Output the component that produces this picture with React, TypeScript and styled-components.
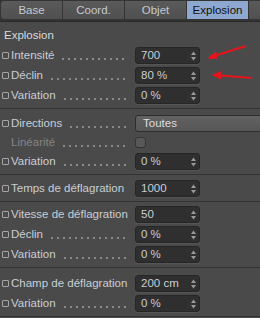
import React from "react";
import styled, { createGlobalStyle } from "styled-components";

const Global = createGlobalStyle`
  html, body { margin: 0; padding: 0; background: #4a4a4a; }
  body { width: 260px; height: 318px; overflow: hidden; font-family: "Liberation Sans", Arial, sans-serif; }
`;

const Panel = styled.div`
  position: relative;
  width: 260px;
  height: 318px;
  background: #4a4a4a;
  overflow: hidden;
  color: #c9ced4;
  font-size: 11.5px;
`;

const TabBar = styled.div`
  display: flex;
  gap: 1px;
  height: 22px;
  padding: 1px 0 0 1px;
  box-sizing: border-box;
  background: #343434;
  border-bottom: 1px solid #2a2a2a;
`;

const Tab = styled.div<{ $active?: boolean }>`
  flex: 0 0 61px;
  height: 18px;
  display: flex;
  align-items: center;
  justify-content: center;
  font-size: 11.5px;
  box-sizing: border-box;
  color: ${(p) => (p.$active ? "#111" : "#c3c9d0")};
  background: ${(p) =>
    p.$active ? "#8ea8cf" : "linear-gradient(#5a5a5a, #505050)"};
  &:first-child { border-radius: 3px 0 0 3px; }
`;

const Header = styled.div`
  height: 23px;
  display: flex;
  align-items: center;
  padding: 2px 0 0 4px;
  box-sizing: border-box;
  font-size: 11.5px;
  color: #d6d9dd;
`;

const Group = styled.div<{ $top?: number }>`
  padding: ${(p) => p.$top ?? 3}px 0 3px 0;
  border-bottom: 1px solid #333333;
  &:last-child { border-bottom: none; }
`;

const Row = styled.div<{ $h?: number }>`
  display: grid;
  grid-template-columns: 135px 1fr;
  align-items: center;
  height: ${(p) => p.$h ?? 20}px;
`;

const LabelCell = styled.div<{ $dim?: boolean }>`
  display: flex;
  align-items: center;
  padding-left: ${(p) => (p.$dim ? 11 : 2)}px;
  padding-right: 7px;
  overflow: hidden;
  white-space: nowrap;
  color: ${(p) => (p.$dim ? "#858585" : "#c9ced4")};
`;

const Mark = styled.span`
  flex: 0 0 auto;
  width: 5px;
  height: 5px;
  border: 1px solid #a6a6a6;
  border-radius: 1px;
  margin-right: 2px;
`;

const LabelText = styled.span`
  flex: 0 0 auto;
`;

const Leader = styled.span`
  flex: 1 1 auto;
  margin: 8px 0 0 6px;
  align-self: center;
  background-image: radial-gradient(circle, #8a8a8a 0.7px, transparent 0.9px);
  background-size: 6px 2px;
  background-position: 0 0;
  height: 2px;
`;

const Field = styled.div`
  position: relative;
  width: 65px;
  height: 17px;
  box-sizing: border-box;
  background: #2f2f2f;
  border: 1px solid #262626;
  border-radius: 3px;
  box-shadow: 0 1px 0 #555;
  display: flex;
  align-items: center;
  padding-left: 5px;
  color: #c9ced4;
`;

const Spin = styled.svg`
  position: absolute;
  right: 3px;
  top: 3px;
`;

const Dropdown = styled.div`
  width: 140px;
  height: 17px;
  box-sizing: border-box;
  background: linear-gradient(#626262, #565656);
  border: 1px solid #2e2e2e;
  border-radius: 3px;
  display: flex;
  align-items: center;
  padding-left: 7px;
  color: #dadde1;
`;

const Check = styled.div`
  width: 11px;
  height: 11px;
  box-sizing: border-box;
  background: #585858;
  border: 1px solid #343434;
  border-radius: 3px;
`;

const Arrows = styled.svg`
  position: absolute;
  left: 0;
  top: 0;
  pointer-events: none;
`;

type Item = { label: string; value?: string; kind?: "field" | "drop" | "check"; leader?: boolean; dim?: boolean; h?: number };

const NumField = ({ value }: { value: string }) => (
  <Field>
    {value}
    <Spin width="5" height="10" viewBox="0 0 5 10">
      <path d="M2.5 0.5 L5 4 L0 4 Z" fill="#9a9a9a" />
      <path d="M0 6 L5 6 L2.5 9.5 Z" fill="#9a9a9a" />
    </Spin>
  </Field>
);

const PropRow = ({ item }: { item: Item }) => (
  <Row $h={item.h}>
    <LabelCell $dim={item.dim}>
      {!item.dim && <Mark />}
      <LabelText>{item.label}</LabelText>
      {item.leader !== false && <Leader />}
    </LabelCell>
    <div>
      {item.kind === "drop" ? (
        <Dropdown>{item.value}</Dropdown>
      ) : item.kind === "check" ? (
        <Check />
      ) : (
        <NumField value={item.value ?? ""} />
      )}
    </div>
  </Row>
);

const groups: { top?: number; items: Item[] }[] = [
  {
    top: 0,
    items: [
      { label: "Intensité", value: "700" },
      { label: "Déclin", value: "80 %" },
      { label: "Variation", value: "0 %" },
    ],
  },
  {
    top: 4,
    items: [
      { label: "Directions", value: "Toutes", kind: "drop" },
      { label: "Linéarité", kind: "check", dim: true, h: 18 },
      { label: "Variation", value: "0 %" },
    ],
  },
  { items: [{ label: "Temps de déflagration", value: "1000", leader: false }] },
  {
    top: 2,
    items: [
      { label: "Vitesse de déflagration", value: "50", leader: false },
      { label: "Déclin", value: "0 %" },
      { label: "Variation", value: "0 %" },
    ],
  },
  {
    top: 5,
    items: [
      { label: "Champ de déflagration", value: "200 cm", leader: false },
      { label: "Variation", value: "0 %" },
    ],
  },
];

export default function App() {
  return (
    <>
      <Global />
      <Panel>
        <TabBar>
          <Tab>Base</Tab>
          <Tab>Coord.</Tab>
          <Tab>Objet</Tab>
          <Tab $active>Explosion</Tab>
          <Tab>Fr</Tab>
        </TabBar>
        <Header>Explosion</Header>
        {groups.map((g, i) => (
          <Group key={i} $top={g.top}>
            {g.items.map((it, j) => (
              <PropRow key={j} item={it} />
            ))}
          </Group>
        ))}
        <Arrows width="260" height="318" viewBox="0 0 260 318">
          <line x1="246" y1="46" x2="214" y2="56" stroke="#e8141c" strokeWidth="2.2" />
          <path d="M207 58.5 L216 51.5 L218 59 Z" fill="#e8141c" />
          <line x1="252" y1="78" x2="220" y2="75.5" stroke="#e8141c" strokeWidth="2.2" />
          <path d="M212 75 L221 71 L221 79.5 Z" fill="#e8141c" />
        </Arrows>
      </Panel>
    </>
  );
}
